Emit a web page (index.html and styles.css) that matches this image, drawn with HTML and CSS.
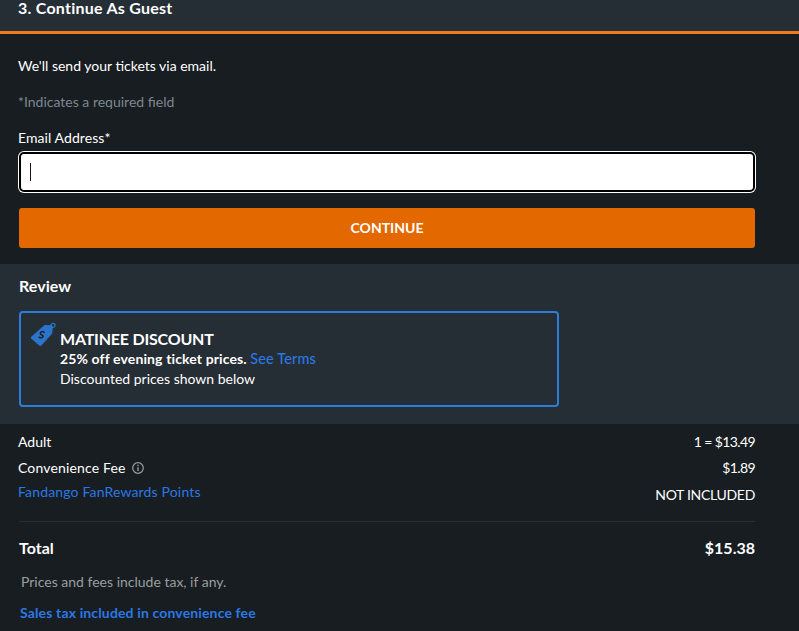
FILE: index.html
```html
<!DOCTYPE html>
<html lang="en">
<head>
    <meta charset="UTF-8">
    <title>Checkout</title>
    <link rel="stylesheet" href="styles.css">
</head>
<body>
    <!-- Guest checkout -->
    <header class="step-header">
        <h2>3. Continue As Guest</h2>
    </header>

    <section class="guest">
        <p class="guest-intro">We'll send your tickets via email.</p>
        <p class="guest-required">*Indicates a required field</p>
        <div class="field-label">Email Address*</div>
        <div class="field"><span class="caret"></span></div>
        <a href="#" class="button">CONTINUE</a>
    </section>

    <!-- Review -->
    <section class="review">
        <h3>Review</h3>
        <div class="promo">
            <svg class="promo-icon" width="27" height="26" viewBox="0 0 27 26">
                <path fill="#2b74c9" d="M1.5 14.6 14 3.6c.4-.4.9-.5 1.4-.5l6 .1c.9 0 1.6.7 1.5 1.6l-.7 6.3c0 .5-.3.9-.6 1.2L11.4 23.6c-.7.6-1.6.5-2.2-.1l-7.9-6.8c-.6-.6-.5-1.5.2-2.1z"/>
                <circle cx="23" cy="3.4" r="2.1" fill="none" stroke="#2b74c9" stroke-width="1.2"/>
                <path fill="none" stroke="#1a2129" stroke-width="1.5" d="M14.6 10.8c-1.2-1.3-2.9-1.4-3.8-.6-1 .9-.6 2 .6 2.5 1.4.5 2.2 1.6 1.2 2.6-.9.9-2.6.7-3.8-.6"/>
            </svg>
            <div class="promo-text">
                <div class="promo-title">MATINEE DISCOUNT</div>
                <div class="promo-offer">25% off evening ticket prices. <a href="#">See Terms</a></div>
                <div class="promo-note">Discounted prices shown below</div>
            </div>
        </div>
    </section>

    <!-- Price summary -->
    <section class="summary">
        <div class="row row-adult"><span>Adult</span><span class="amount">1 = $13.49</span></div>
        <div class="row row-fee">
            <span class="fee-name">Convenience Fee
                <svg width="12" height="12" viewBox="0 0 12 12">
                    <circle cx="6" cy="6" r="5.3" fill="none" stroke="#9a9d9f" stroke-width="1.2"/>
                    <path stroke="#9a9d9f" stroke-width="1.4" d="M6 5.2v3.8M6 2.8v1.4"/>
                </svg>
            </span>
            <span class="amount">$1.89</span>
        </div>
        <div class="row row-points"><a href="#">Fandango FanRewards Points</a><span class="not-included">NOT INCLUDED</span></div>
        <div class="row row-total"><span>Total</span><span>$15.38</span></div>
        <p class="tax-note">Prices and fees include tax, if any.</p>
        <a href="#" class="tax-link">Sales tax included in convenience fee</a>
    </section>
</body>
</html>
```

FILE: styles.css
```css
/* Global Styles */
body, html {
    margin: 0;
    padding: 0;
    height: 631px;
    overflow: hidden;
    font-family: 'Lato', sans-serif;
    font-size: 14px;
    background-color: #181d21;
    color: #ffffff;
}

a {
    color: #2b78e4;
    text-decoration: none;
}

/* Step header */
.step-header {
    height: 31px;
    padding-left: 18px;
    background: #252d35;
    border-bottom: 3px solid #f27a1a;
}

.step-header h2 {
    margin: 0;
    font-size: 16px;
    font-weight: 700;
    line-height: 15px;
    letter-spacing: 0.25px;
}

/* Guest form */
.guest {
    height: 206px;
    padding: 24px 44px 0 18px;
}

.guest-intro {
    margin: 0;
    line-height: 16px;
}

.guest-required {
    margin: 20px 0 0;
    line-height: 16px;
    color: #7d8790;
}

.field-label {
    margin-top: 20px;
    line-height: 16px;
    letter-spacing: 0.08px;
}

.field {
    display: flex;
    align-items: center;
    height: 36px;
    margin: 6px 0 0 1px;
    padding-left: 9px;
    background: #ffffff;
    border: 2px solid #000000;
    border-radius: 5px;
    box-shadow: 0 0 0 1px #ffffff;
}

.caret {
    width: 1px;
    height: 18px;
    background: #1a1a1a;
}

.button {
    display: block;
    margin: 16px 0 0 1px;
    height: 40px;
    line-height: 40px;
    background: #e46800;
    color: white;
    font-weight: 700;
    text-align: center;
    border-radius: 3px;
}

/* Review */
.review {
    height: 160px;
    padding: 0 44px 0 19px;
    background: #252d35;
}

.review h3 {
    margin: 0;
    padding-top: 14px;
    font-size: 16px;
    line-height: 16px;
    letter-spacing: 0.05px;
}

.promo {
    display: flex;
    width: 536px;
    height: 92px;
    margin-top: 17px;
    border: 2px solid #2d7dd8;
    border-radius: 4px;
}

.promo-icon {
    flex: none;
    margin: 9px 0 0 9px;
}

.promo-text {
    margin: 15px 0 0 3px;
}

.promo-title {
    font-size: 16px;
    font-weight: 700;
    line-height: 21px;
    letter-spacing: -0.2px;
}

.promo-offer {
    font-weight: 700;
    line-height: 20px;
    letter-spacing: 0.12px;
}

.promo-offer a {
    font-weight: 500;
    font-size: 14.5px;
}

.promo-note {
    line-height: 20px;
}

/* Price summary */
.summary {
    padding: 10px 44px 0 18px;
}

.row {
    display: flex;
    justify-content: space-between;
    align-items: flex-start;
    line-height: 16px;
}

.row-fee {
    margin-top: 10px;
}

.fee-name {
    letter-spacing: 0.15px;
}

.fee-name svg {
    margin-left: 3px;
    vertical-align: -1px;
}

.amount {
    letter-spacing: -0.6px;
}

.row-points {
    margin: 8px 0 0 1px;
    height: 21px;
    padding-bottom: 16px;
    border-bottom: 1px solid #2a2f33;
}

.row-points a {
    margin-left: -1px;
    letter-spacing: 0.16px;
}

.not-included {
    margin-top: 3px;
    letter-spacing: -0.3px;
}

.row-total {
    margin: 18px 0 0 1px;
    font-size: 16px;
    font-weight: 700;
}

.tax-note {
    margin: 18px 0 0 3px;
    line-height: 16px;
    color: #9a9d9f;
}

.tax-link {
    display: block;
    margin: 15px 0 0 2px;
    line-height: 16px;
    font-weight: 700;
    letter-spacing: 0.14px;
}
```
